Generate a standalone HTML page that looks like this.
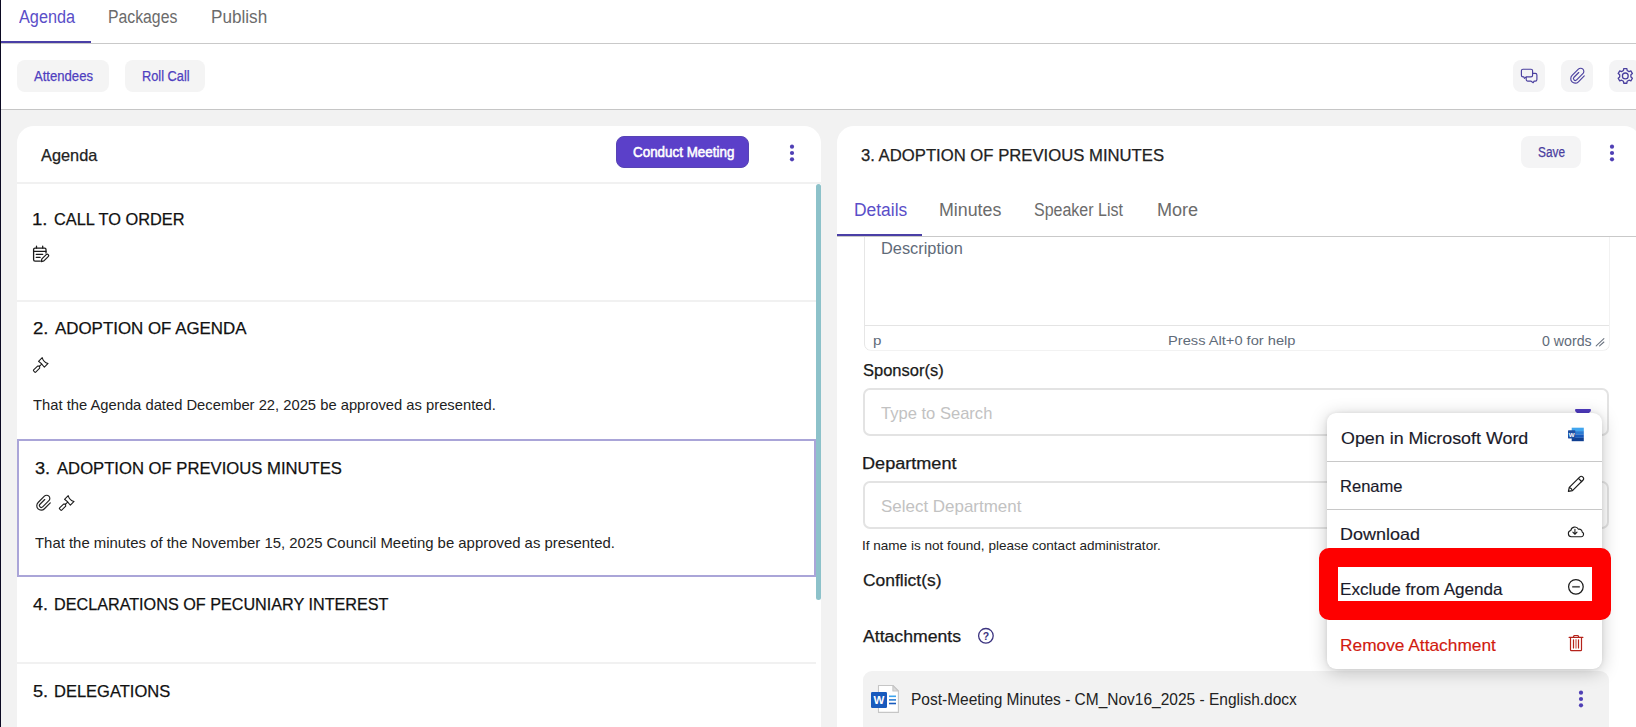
<!DOCTYPE html>
<html lang="en"><head><meta charset="utf-8"><title>Agenda</title>
<style>
html,body{margin:0;padding:0}
body{width:1636px;height:727px;overflow:hidden;position:relative;background:#f2f2f2;font-family:"Liberation Sans",sans-serif}
div,span.t,svg{position:absolute}
span.t{white-space:nowrap;transform-origin:0 0}
</style></head><body>
<div style="left:0px;top:0px;width:1636px;height:109px;background:#fff"></div>
<div style="left:0px;top:43px;width:1636px;height:1px;background:#c9c9c9"></div>
<div style="left:0px;top:109px;width:1636px;height:1px;background:#c6c6c6"></div>
<div style="left:0px;top:41px;width:91px;height:2px;background:#4a3fa6"></div>
<span class="t" style="left:18.6px;top:6.0px;line-height:22px;transform:scaleX(0.9032);font-size:18px;color:#5a4ec8;">Agenda</span>
<span class="t" style="left:108.1px;top:6.0px;line-height:22px;transform:scaleX(0.8766);font-size:18px;color:#6b6b6b;">Packages</span>
<span class="t" style="left:211.1px;top:6.0px;line-height:22px;transform:scaleX(0.9511);font-size:18px;color:#6b6b6b;">Publish</span>
<div style="left:17px;top:60px;width:92px;height:32px;background:#f4f4f4;border-radius:8px"></div>
<div style="left:125px;top:60px;width:80px;height:32px;background:#f4f4f4;border-radius:8px"></div>
<span class="t" style="left:34.3px;top:67.0px;line-height:18px;transform:scaleX(0.9355);font-size:14px;color:#4f3fc0;-webkit-text-stroke:0.25px #4f3fc0;">Attendees</span>
<span class="t" style="left:141.7px;top:67.0px;line-height:18px;transform:scaleX(0.9134);font-size:14px;color:#4f3fc0;-webkit-text-stroke:0.25px #4f3fc0;">Roll Call</span>
<div style="left:1513px;top:60px;width:32px;height:32px;background:#f4f4f5;border-radius:8px"></div>
<svg style="left:1513px;top:60px;overflow:visible" width="32" height="32" viewBox="0 0 32 32" ><g fill="none" stroke="#4a3f9f" stroke-width="1.15" stroke-linejoin="round" stroke-linecap="round"><path d="M19.7 13.3h2.6a1.6 1.6 0 0 1 1.6 1.6v4.6a1.6 1.6 0 0 1-1.6 1.6h-1.2l-0.9 1.6l-2.4-1.6h-3.0a1.6 1.6 0 0 1-1.6-1.6v-2.4"/><path d="M10.0 9.2h8.0a1.6 1.6 0 0 1 1.6 1.6v4.4a1.6 1.6 0 0 1-1.6 1.6h-4.6l-2.0 1.6l-0.5-1.6h-0.9a1.6 1.6 0 0 1-1.6-1.6v-4.4a1.6 1.6 0 0 1 1.6-1.6z" fill="#f3f3f4"/></g></svg>
<div style="left:1561px;top:60px;width:32px;height:32px;background:#f4f4f5;border-radius:8px"></div>
<svg style="left:1565.85px;top:64.4px;overflow:visible" width="23.9" height="23.9" viewBox="0 0 512 512" ><g transform="rotate(45 256 256)"><path d="M216.08 192v143.85a40.08 40.08 0 0080.15 0l.13-188.55a67.94 67.94 0 10-135.87 0v189.82a95.51 95.51 0 10191 0V159.74" fill="none" stroke="#4a3f9f" stroke-linecap="round" stroke-width="24"/></g></svg>
<div style="left:1609px;top:60px;width:32px;height:32px;background:#f4f4f5;border-radius:8px"></div>
<svg style="left:1609px;top:60px;overflow:visible" width="32" height="32" viewBox="0 0 32 32" ><path d="M14.44 10.51 L14.74 8.56 L17.86 8.56 L18.16 10.51 L20.04 11.60 L21.87 10.88 L23.43 13.58 L21.90 14.81 L21.90 16.99 L23.43 18.22 L21.87 20.92 L20.04 20.20 L18.16 21.29 L17.86 23.24 L14.74 23.24 L14.44 21.29 L12.56 20.20 L10.73 20.92 L9.17 18.22 L10.70 16.99 L10.70 14.81 L9.17 13.58 L10.73 10.88 L12.56 11.60Z" fill="none" stroke="#4a3f9f" stroke-width="1.3" stroke-linejoin="round"/><circle cx="16.3" cy="15.9" r="2.9" fill="none" stroke="#4a3f9f" stroke-width="1.3"/></svg>
<div style="left:17px;top:125.6px;width:804px;height:640px;background:#fff;border-radius:17px"></div>
<div style="left:17px;top:182px;width:804px;height:2px;background:#f1f1f1"></div>
<span class="t" style="left:41.0px;top:145.0px;line-height:20.5px;transform:scaleX(0.9895);font-size:16.5px;color:#222;-webkit-text-stroke:0.25px #222;">Agenda</span>
<div style="left:616px;top:136px;width:133px;height:32px;box-sizing:border-box;background:#5b40c9;border:1px solid #5744b4;border-radius:8px"></div>
<span class="t" style="left:632.5px;top:143.0px;line-height:18px;transform:scaleX(0.9575);font-size:14px;color:#fff;-webkit-text-stroke:0.55px #fff;">Conduct Meeting</span>
<svg style="left:789px;top:144px;overflow:visible" width="6" height="18" viewBox="0 0 6 18" ><circle cx="3" cy="2.7" r="2.1" fill="#4f3fb5"/><circle cx="3" cy="9" r="2.1" fill="#4f3fb5"/><circle cx="3" cy="15.3" r="2.1" fill="#4f3fb5"/></svg>
<div style="left:816px;top:184px;width:5px;height:416px;background:#8dc2ca;border-radius:3px"></div>
<span class="t" style="left:32.4px;top:209.0px;line-height:21px;transform:scaleX(1.0957);font-size:17px;color:#111;-webkit-text-stroke:0.25px #111;">1.</span>
<span class="t" style="left:54.4px;top:209.0px;line-height:21px;transform:scaleX(0.9616);font-size:17px;color:#111;-webkit-text-stroke:0.25px #111;">CALL TO ORDER</span>
<svg style="left:30px;top:244px;overflow:visible" width="22" height="20" viewBox="0 0 22 20" ><g fill="none" stroke="#1c1c1c" stroke-width="1.3" stroke-linecap="round" stroke-linejoin="round"><path d="M16.0 9.0v-3.5a1.4 1.4 0 0 0-1.4-1.4h-9.6a1.4 1.4 0 0 0-1.4 1.4v10.2a1.4 1.4 0 0 0 1.4 1.4h5.2"/><path d="M3.6 7.3h12.4"/><path d="M6.5 2.2v1.9M12.7 2.2v1.9"/><path d="M6.3 10.4h6.4M6.3 13.4h3.8"/><path d="M11.2 17.6L11.9 14.9L16.2 10.6A1.41 1.41 0 0 1 18.2 12.6L13.9 16.9Z" fill="#fff" stroke-width="1.2"/></g></svg>
<div style="left:17px;top:300px;width:799px;height:2px;background:#f1f1f1"></div>
<span class="t" style="left:32.5px;top:318.0px;line-height:21px;transform:scaleX(1.0917);font-size:17px;color:#111;-webkit-text-stroke:0.25px #111;">2.</span>
<span class="t" style="left:55.1px;top:318.0px;line-height:21px;transform:scaleX(0.9940);font-size:17px;color:#111;-webkit-text-stroke:0.25px #111;">ADOPTION OF AGENDA</span>
<svg style="left:0;top:0;overflow:visible" width="1" height="1"><g transform="translate(43.3 362.4) rotate(45)" fill="none" stroke="#1c1c1c" stroke-width="1.05" stroke-linejoin="round" stroke-linecap="round"><path d="M-4.15 -2.6 Q0 -0.1 4.15 -2.6 L4.15 2.6 Q0 1.8 -4.15 2.6 Z"/><path d="M0 2.3V5.2"/><path d="M-1.5 6.6L0 5.3L1.5 6.6V12.2a0.7 0.7 0 0 1-0.7 0.7h-1.6a0.7 0.7 0 0 1-0.7-0.7Z"/></g></svg>
<span class="t" style="left:33.1px;top:395.0px;line-height:19px;transform:scaleX(0.9839);font-size:15px;color:#222;">That the Agenda dated December 22, 2025 be approved as presented.</span>
<div style="left:17px;top:439px;width:799px;height:138px;box-sizing:border-box;border:2px solid #aaa5d8"></div>
<span class="t" style="left:34.8px;top:458.0px;line-height:21px;transform:scaleX(1.0694);font-size:17px;color:#111;-webkit-text-stroke:0.25px #111;">3.</span>
<span class="t" style="left:57.1px;top:458.0px;line-height:21px;transform:scaleX(0.9795);font-size:17px;color:#111;-webkit-text-stroke:0.25px #111;">ADOPTION OF PREVIOUS MINUTES</span>
<svg style="left:31.85px;top:491.37px;overflow:visible" width="23.9" height="23.9" viewBox="0 0 512 512" ><g transform="rotate(45 256 256)"><path d="M216.08 192v143.85a40.08 40.08 0 0080.15 0l.13-188.55a67.94 67.94 0 10-135.87 0v189.82a95.51 95.51 0 10191 0V159.74" fill="none" stroke="#222" stroke-linecap="round" stroke-width="25"/></g></svg>
<svg style="left:0;top:0;overflow:visible" width="1" height="1"><g transform="translate(69.3 500.4) rotate(45)" fill="none" stroke="#1c1c1c" stroke-width="1.05" stroke-linejoin="round" stroke-linecap="round"><path d="M-4.15 -2.6 Q0 -0.1 4.15 -2.6 L4.15 2.6 Q0 1.8 -4.15 2.6 Z"/><path d="M0 2.3V5.2"/><path d="M-1.5 6.6L0 5.3L1.5 6.6V12.2a0.7 0.7 0 0 1-0.7 0.7h-1.6a0.7 0.7 0 0 1-0.7-0.7Z"/></g></svg>
<span class="t" style="left:35.1px;top:533.0px;line-height:19px;transform:scaleX(0.9935);font-size:15px;color:#222;">That the minutes of the November 15, 2025 Council Meeting be approved as presented.</span>
<span class="t" style="left:33.0px;top:594.0px;line-height:21px;transform:scaleX(1.0480);font-size:17px;color:#111;-webkit-text-stroke:0.25px #111;">4.</span>
<span class="t" style="left:53.9px;top:594.0px;line-height:21px;transform:scaleX(0.9518);font-size:17px;color:#111;-webkit-text-stroke:0.25px #111;">DECLARATIONS OF PECUNIARY INTEREST</span>
<div style="left:17px;top:662px;width:799px;height:2px;background:#f1f1f1"></div>
<span class="t" style="left:32.8px;top:681.0px;line-height:21px;transform:scaleX(1.0694);font-size:17px;color:#111;-webkit-text-stroke:0.25px #111;">5.</span>
<span class="t" style="left:53.9px;top:681.0px;line-height:21px;transform:scaleX(0.9707);font-size:17px;color:#111;-webkit-text-stroke:0.25px #111;">DELEGATIONS</span>
<div style="left:837px;top:125.6px;width:803.5px;height:640px;background:#fff;border-radius:17px"></div>
<span class="t" style="left:860.8px;top:145.0px;line-height:20.5px;transform:scaleX(1.0109);font-size:16.5px;color:#222;-webkit-text-stroke:0.25px #222;">3. ADOPTION OF PREVIOUS MINUTES</span>
<div style="left:1521px;top:136px;width:60px;height:32px;background:#f4f4f5;border-radius:8px"></div>
<span class="t" style="left:1538.1px;top:143.0px;line-height:18px;transform:scaleX(0.8452);font-size:14px;color:#4a3d9e;-webkit-text-stroke:0.25px #4a3d9e;">Save</span>
<svg style="left:1609px;top:144px;overflow:visible" width="6" height="18" viewBox="0 0 6 18" ><circle cx="3" cy="2.7" r="2.1" fill="#4f3fb5"/><circle cx="3" cy="9" r="2.1" fill="#4f3fb5"/><circle cx="3" cy="15.3" r="2.1" fill="#4f3fb5"/></svg>
<div style="left:837px;top:236px;width:803px;height:1px;background:#c9c9c9"></div>
<div style="left:837px;top:234px;width:85px;height:2px;background:#4a3fa6"></div>
<span class="t" style="left:853.5px;top:199.0px;line-height:22px;transform:scaleX(0.9668);font-size:18px;color:#5a4ec8;">Details</span>
<span class="t" style="left:938.8px;top:199.0px;line-height:22px;transform:scaleX(0.9893);font-size:18px;color:#6b6b6b;">Minutes</span>
<span class="t" style="left:1034.3px;top:199.0px;line-height:22px;transform:scaleX(0.8887);font-size:18px;color:#6b6b6b;">Speaker List</span>
<span class="t" style="left:1156.8px;top:199.0px;line-height:22px;transform:scaleX(1.0039);font-size:18px;color:#6b6b6b;">More</span>
<div style="left:863.5px;top:200px;width:746px;height:150.5px;box-sizing:border-box;border:1.5px solid #e6e6e6;border-radius:7px;clip-path:inset(37px 0 0 0)"></div>
<div style="left:865px;top:325px;width:744px;height:1px;background:#e4e4e4"></div>
<span class="t" style="left:881.3px;top:239.0px;line-height:20px;transform:scaleX(1.0212);font-size:16px;color:#5f6b79;">Description</span>
<span class="t" style="left:872.6px;top:332.0px;line-height:17px;transform:scaleX(1.1667);font-size:13px;color:#5f6b79;">p</span>
<span class="t" style="left:1168.2px;top:332.0px;line-height:17px;transform:scaleX(1.1274);font-size:13px;color:#5f6b79;">Press Alt+0 for help</span>
<span class="t" style="left:1541.5px;top:332.0px;line-height:18px;transform:scaleX(1.0125);font-size:14px;color:#5f6b79;">0 words</span>
<svg style="left:1594px;top:336px;overflow:visible" width="12" height="12" viewBox="0 0 12 12" ><path d="M2.2 9.8L9.9 2.7M5.6 9.8L9.9 6.0" stroke="#6b7480" stroke-width="1.1" fill="none" stroke-linecap="round"/></svg>
<span class="t" style="left:862.8px;top:361.0px;line-height:20px;transform:scaleX(1.0312);font-size:16px;color:#1a1a1a;-webkit-text-stroke:0.25px #1a1a1a;">Sponsor(s)</span>
<div style="left:863.3px;top:388px;width:746px;height:47.5px;box-sizing:border-box;border:2px solid #e3e3e3;border-radius:7px;background:#fff"></div>
<span class="t" style="left:881.3px;top:403.0px;line-height:21px;transform:scaleX(0.9738);font-size:17px;color:#c2c2c2;">Type to Search</span>
<div style="left:1575px;top:409px;width:16px;height:4.5px;background:#4f3bc0;border-radius:1px 1px 6px 6px / 1px 1px 4px 4px"></div>
<span class="t" style="left:862.1px;top:454.0px;line-height:20px;transform:scaleX(1.1307);font-size:16px;color:#1a1a1a;-webkit-text-stroke:0.25px #1a1a1a;">Department</span>
<div style="left:863.3px;top:481px;width:746px;height:47.7px;box-sizing:border-box;border:2px solid #e3e3e3;border-radius:7px;background:#fff"></div>
<span class="t" style="left:880.6px;top:496.0px;line-height:21px;transform:scaleX(0.9971);font-size:17px;color:#c2c2c2;">Select Department</span>
<span class="t" style="left:862.0px;top:537.0px;line-height:17px;transform:scaleX(1.0411);font-size:13px;color:#222;">If name is not found, please contact administrator.</span>
<span class="t" style="left:862.5px;top:571.0px;line-height:20px;transform:scaleX(1.0908);font-size:16px;color:#1a1a1a;-webkit-text-stroke:0.25px #1a1a1a;">Conflict(s)</span>
<span class="t" style="left:863.3px;top:627.0px;line-height:20px;transform:scaleX(1.1017);font-size:16px;color:#1a1a1a;-webkit-text-stroke:0.25px #1a1a1a;">Attachments</span>
<svg style="left:976.1px;top:626.3px;overflow:visible" width="20" height="20" viewBox="0 0 20 20" ><circle cx="9.9" cy="9.8" r="7.3" fill="none" stroke="#3d3580" stroke-width="1.3"/><text x="9.9" y="13.5" text-anchor="middle" font-family="Liberation Sans, sans-serif" font-weight="bold" font-size="10.5" fill="#3d3580">?</text></svg>
<div style="left:863.3px;top:671px;width:746px;height:80px;background:#f2f2f2;border-radius:9px"></div>
<svg style="left:868px;top:682px;overflow:visible" width="34" height="34" viewBox="0 0 34 34" ><path d="M10.5 3.5h14.4l5.5 5.5v21.4h-19.9z" fill="#fff" stroke="#c6c6c6" stroke-width="1.1"/><path d="M24.9 3.5v5.5h5.5z" fill="#dcdcdc" stroke="#c6c6c6" stroke-width="1.1" stroke-linejoin="round"/><rect x="21" y="13.5" width="7" height="1.6" fill="#41a5ee"/><rect x="21" y="17.1" width="7" height="1.6" fill="#2b7cd3"/><rect x="21" y="20.7" width="7" height="1.6" fill="#185abd"/><rect x="3" y="10" width="16" height="16" rx="1.2" fill="#185abd"/><text x="11" y="22.3" text-anchor="middle" font-family="Liberation Sans, sans-serif" font-weight="bold" font-size="11.5" fill="#fff">W</text></svg>
<span class="t" style="left:911.0px;top:690.0px;line-height:20px;transform:scaleX(0.9683);font-size:16px;color:#222;">Post-Meeting Minutes - CM_Nov16_2025 - English.docx</span>
<svg style="left:1578px;top:690px;overflow:visible" width="6" height="18" viewBox="0 0 6 18" ><circle cx="3" cy="2.7" r="2.1" fill="#4f3fb5"/><circle cx="3" cy="9" r="2.1" fill="#4f3fb5"/><circle cx="3" cy="15.3" r="2.1" fill="#4f3fb5"/></svg>
<div style="left:1327px;top:413px;width:275px;height:256px;background:#fff;border-radius:9px;box-shadow:0 3px 18px rgba(0,0,0,.22),0 0 4px rgba(0,0,0,.08)"></div>
<div style="left:1327px;top:461px;width:275px;height:1px;background:#c8c8c8"></div>
<div style="left:1327px;top:509px;width:275px;height:1px;background:#c8c8c8"></div>
<div style="left:1327px;top:557px;width:275px;height:1px;background:#c8c8c8"></div>
<span class="t" style="left:1340.7px;top:428.0px;line-height:20.5px;transform:scaleX(1.0826);font-size:16.5px;color:#1a1a2a;-webkit-text-stroke:0.15px #1a1a2a;">Open in Microsoft Word</span>
<svg style="left:1566px;top:426px;overflow:visible" width="20" height="18" viewBox="0 0 20 18" ><rect x="5.7" y="1.7" width="12.1" height="3.5" fill="#41a5ee"/><rect x="5.7" y="5.1" width="12.1" height="3.4" fill="#2b7cd3"/><rect x="5.7" y="8.4" width="12.1" height="3.4" fill="#185abd"/><rect x="5.7" y="11.7" width="12.1" height="3.5" fill="#103f91"/><rect x="2" y="4.2" width="7.3" height="8.2" rx="0.6" fill="#1f4fa3"/><text x="5.65" y="10.6" text-anchor="middle" font-family="Liberation Sans, sans-serif" font-weight="bold" font-size="6.2" fill="#fff">W</text></svg>
<span class="t" style="left:1340.2px;top:476.0px;line-height:20.5px;transform:scaleX(1.0033);font-size:16.5px;color:#1a1a2a;-webkit-text-stroke:0.15px #1a1a2a;">Rename</span>
<svg style="left:1566px;top:474px;overflow:visible" width="20" height="20" viewBox="0 0 20 20" ><g fill="none" stroke="#1c1c1c" stroke-width="1.2" stroke-linejoin="round" stroke-linecap="round"><path d="M2.4 17.4l0.9-4.0l10.6-10.6a1.9 1.9 0 0 1 2.7 0l0.5 0.5a1.9 1.9 0 0 1 0 2.7l-10.6 10.6z"/><path d="M12.4 4.3l3.2 3.2M3.5 13.6q2.2 0.6 2.8 2.8"/></g></svg>
<span class="t" style="left:1340.1px;top:524.0px;line-height:20.5px;transform:scaleX(1.0891);font-size:16.5px;color:#1a1a2a;-webkit-text-stroke:0.15px #1a1a2a;">Download</span>
<svg style="left:1566.2px;top:524.2px;overflow:visible" width="19" height="15.2" viewBox="0 0 20 16" ><g fill="none" stroke="#1c1c1c" stroke-width="1.15" stroke-linejoin="round" stroke-linecap="round"><path d="M5.6 13.4a3.3 3.3 0 0 1-0.6-6.5a4.3 4.3 0 0 1 8.1-1.3a3.0 3.0 0 0 1 3.9 2.9a2.6 2.6 0 0 1-1.6 4.9z"/><path d="M9.4 5.6v5.0M7.2 8.6l2.2 2.2l2.2-2.2"/></g></svg>
<span class="t" style="left:1340.2px;top:579.0px;line-height:20.5px;transform:scaleX(1.0369);font-size:16.5px;color:#1a1a2a;-webkit-text-stroke:0.15px #1a1a2a;">Exclude from Agenda</span>
<svg style="left:1566px;top:577px;overflow:visible" width="20" height="20" viewBox="0 0 20 20" ><circle cx="9.9" cy="9.8" r="7.3" fill="none" stroke="#1c1c1c" stroke-width="1.25"/><path d="M6.2 9.8h7.6" stroke="#555" stroke-width="1.7"/></svg>
<span class="t" style="left:1340.2px;top:635.0px;line-height:20.5px;transform:scaleX(1.0492);font-size:16.5px;color:#d11a0f;-webkit-text-stroke:0.15px #d11a0f;">Remove Attachment</span>
<svg style="left:1566px;top:633px;overflow:visible" width="20" height="20" viewBox="0 0 20 20" ><g fill="none" stroke="#b5231b" stroke-width="1.2" stroke-linejoin="round" stroke-linecap="round"><path d="M3.1 4.3h13.8"/><path d="M7.4 4.1l0.7-1.6h3.9l0.7 1.6"/><path d="M4.5 4.5v12.2a1 1 0 0 0 1 1h9a1 1 0 0 0 1-1v-12.2"/><path d="M7.5 6.8v8.2M12.5 6.8v8.2"/><path d="M10 6.8v8.2" stroke="#d9867f" stroke-width="1.6"/></g></svg>
<div style="left:1319px;top:548px;width:292px;height:72px;box-sizing:border-box;border:19px solid #fe0000;border-radius:10px;"></div>
<div style="left:0px;top:0px;width:1px;height:727px;background:#0b0922"></div>
</body></html>
